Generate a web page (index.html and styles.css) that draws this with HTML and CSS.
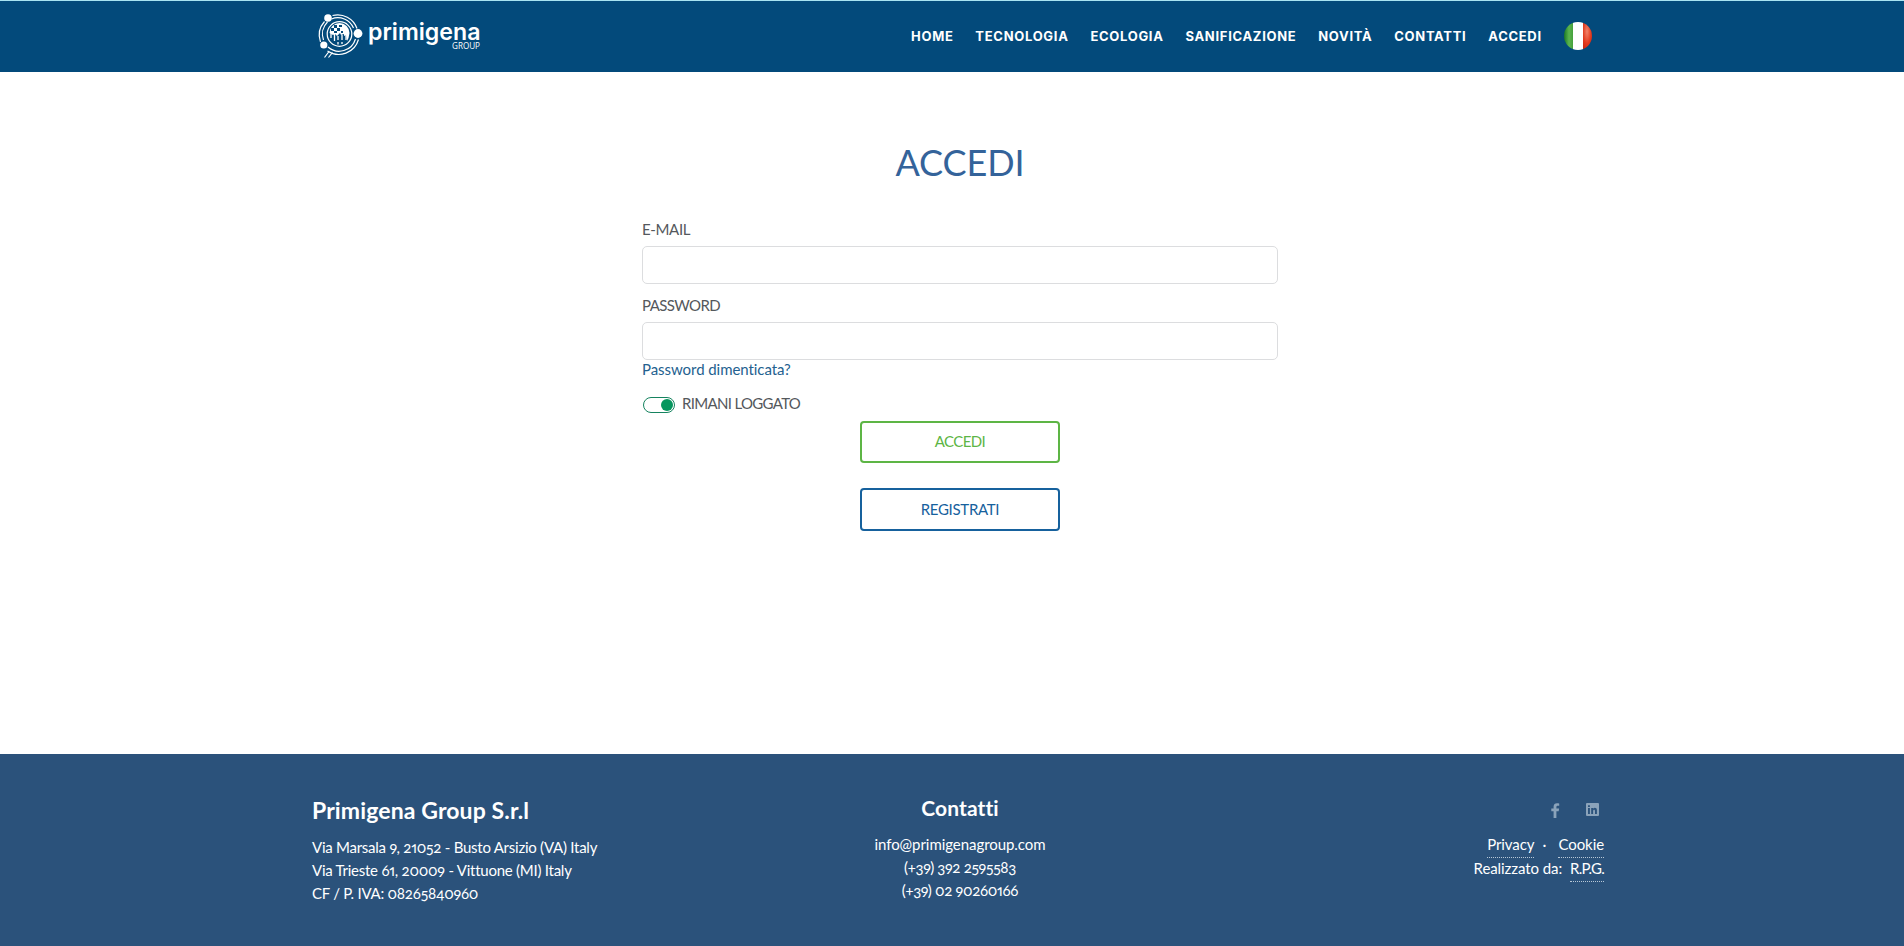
FILE: index.html
```
<!DOCTYPE html>
<html lang="it">
<head>
<meta charset="utf-8">
<title>Accedi - Primigena Group</title>
<link rel="stylesheet" href="styles.css">
</head>
<body>
<header class="header">
  <svg class="logo" width="170" height="54" viewBox="312 8 170 54" role="img" aria-label="Primigena Group">
    <g fill="none" stroke="#fff">
      <circle cx="339.500" cy="34" r="12.300" stroke-width="1.200"/>
      <path d="M332.500 15.500a20.500 20.500 0 0 1 24.500 13M358.500 39.500a20.500 20.500 0 0 1-31 11.500M320.500 42a20.500 20.500 0 0 1 4-20.500" stroke-width="1.200"/>
      <path d="M331.500 19a17 17 0 0 1 22 9M355.500 39a17 17 0 0 1-27.500 8M323.500 40a17 17 0 0 1 4-18" stroke-width="1.200"/>
      <path d="M324.500 57.500l4.500-6M328.500 57.500l4-5" stroke-width="1.200"/>
    </g>
    <path d="M329.500 33a10 10 0 0 1 20 0l-1 5-1.500 3-1-6-2 1v-2l-3 1-1-2-3 3-2-2-2 1z" fill="#fff"/>
    <path d="M331 33v5M334.500 34v7M338 36v4M338 42v2.500M342 35v5M342 42v2M346 34v6" stroke="#fff" stroke-width="1.300"/>
    <path d="M331 28h3v3h-3zM334 25h3v3h-3zM339 25h3v2h-3zM337 28h3v3h-3zM341 31h2v2h-2zM334 31h3v2h-3z" fill="#04497a"/>
    <g fill="#fff"><circle cx="328" cy="18" r="3.800"/><circle cx="358" cy="33.500" r="4.400"/><circle cx="323.800" cy="45" r="3.600"/></g>
    <text class="logo-name" x="368" y="40.300" textLength="112.500" lengthAdjust="spacingAndGlyphs">primigena</text>
    <text class="logo-sub" x="452" y="49" textLength="28" lengthAdjust="spacingAndGlyphs">GROUP</text>
  </svg>
  <nav class="nav">
    <a>HOME</a><a>TECNOLOGIA</a><a>ECOLOGIA</a><a>SANIFICAZIONE</a><a>NOVITÀ</a><a>CONTATTI</a><a>ACCEDI</a>
  </nav>
  <svg class="flag" width="30" height="30" viewBox="0 0 30 30" role="img" aria-label="Italiano">
    <defs>
      <clipPath id="disc"><circle cx="15" cy="15" r="14"/></clipPath>
      <linearGradient id="green" x1="0" x2="1"><stop offset="0" stop-color="#0d6c1c"/><stop offset=".6" stop-color="#5bb54e"/><stop offset="1" stop-color="#45a03c"/></linearGradient>
      <radialGradient id="red" cx=".4" cy=".35" r=".8"><stop offset="0" stop-color="#f2836a"/><stop offset=".5" stop-color="#e23a1e"/><stop offset="1" stop-color="#c01c08"/></radialGradient>
    </defs>
    <g clip-path="url(#disc)">
      <path d="M0 0h10v30H0z" fill="url(#green)"/>
      <path d="M10 0h10v30H10z" fill="#fff"/>
      <path d="M20 0h10v30H20z" fill="url(#red)"/>
    </g>
  </svg>
</header>
<main class="main">
  <h1 class="title">ACCEDI</h1>
  <form class="form">
    <label class="label email-label" for="email">E-MAIL</label>
    <input class="input" id="email" type="email">
    <label class="label password-label" for="password">PASSWORD</label>
    <input class="input" id="password" type="password">
    <a class="forgot">Password dimenticata?</a>
    <div class="remember">
      <span class="switch"><span class="knob"></span></span>
      <span class="remember-text">RIMANI LOGGATO</span>
    </div>
    <button class="button login" type="button">ACCEDI</button>
    <button class="button register" type="button">REGISTRATI</button>
  </form>
</main>
<footer class="footer">
  <section class="company">
    <h2 class="company-name">Primigena Group S.r.l</h2>
    <p class="address">Via Marsala 9, 21052 - Busto Arsizio (VA) Italy</p>
    <p class="address">Via Trieste 61, 20009 - Vittuone (MI) Italy</p>
    <p class="address">CF / P. IVA: 08265840960</p>
  </section>
  <section class="contacts">
    <h3 class="contacts-title">Contatti</h3>
    <p class="mail">info@primigenagroup.com</p>
    <p class="phone">(+39) 392 2595583</p>
    <p class="phone">(+39) 02 90260166</p>
  </section>
  <section class="links">
    <div class="social">
      <svg width="9" height="15" viewBox="0 0 9 15"><path d="M2.600 15V8.300H.3V5.500h2.300V3.600C2.600 1.300 4 .2 6 .2c1 0 1.900.1 2.200.2v2.400H6.800c-1.100 0-1.400.6-1.400 1.300v1.400h2.700l-.4 2.800H5.400V15z"/></svg>
      <svg width="13" height="13" viewBox="0 0 13 13"><path fill-rule="evenodd" d="M1 0h11a1 1 0 0 1 1 1v11a1 1 0 0 1-1 1H1a1 1 0 0 1-1-1V1a1 1 0 0 1 1-1zM2 5v6h1.900V5zM2 2.300v1.800h1.900V2.300zM5.200 5v6h1.900V7.800c0-1.500 1.900-1.500 1.900 0V11h1.900V7.200c0-2.700-2.700-3-3.800-1.400V5z"/></svg>
    </div>
    <p class="legal"><a>Privacy</a><span class="dot">·</span><a>Cookie</a></p>
    <p class="legal"><span class="credit">Realizzato da:</span><a class="rpg">R.P.G.</a></p>
  </section>
</footer>
</body>
</html>
```
FILE: styles.css
```
* { box-sizing: border-box; }
html { overflow: hidden; }
body {
  margin: 0;
  width: 1920px;
  height: 946px;
  display: flex;
  flex-direction: column;
  background: #fff;
  color: #54585c;
  font: 15px/24px Lato, "Liberation Sans", sans-serif;
}
h1, h2, h3, p { margin: 0; font-weight: 400; }

.header {
  height: 72px;
  flex: none;
  display: flex;
  align-items: flex-start;
  padding-left: 312px;
  background: #034a7b;
  border-top: 1px solid #a9e4f2;
}
.logo { margin-top: 7px; overflow: visible; }
.logo-name { font: 600 23.500px Inter, sans-serif; fill: #fff; }
.logo-sub { font: 9.500px "Open Sans", sans-serif; fill: #fff; }
.nav {
  display: flex;
  gap: 21.800px;
  margin-left: 429px;
  padding-top: 22px;
  color: #fff;
  font: 700 13px/26px Inter, sans-serif;
  letter-spacing: .7px;
}
.flag { margin: 20px 0 0 21.500px; }

.main { flex: none; height: 682px; padding-top: 68px; }
.title {
  text-align: center;
  font-size: 36px;
  line-height: 44px;
  letter-spacing: -.1px;
  color: #34639a;
}
.form {
  width: 636px;
  margin: 33px auto 0;
  display: flex;
  flex-direction: column;
}
.label { margin-bottom: 5px; }
.email-label { letter-spacing: -.35px; }
.password-label { margin-top: 9px; letter-spacing: -.6px; }
.input {
  height: 38px;
  border: 1px solid #dcdddf;
  border-radius: 5px;
  background: #fff;
}
.forgot { line-height: 18px; letter-spacing: -.06px; color: #24618f; }
.remember { display: flex; align-items: flex-start; gap: 7px; margin-top: 13px; }
.switch {
  width: 32px;
  height: 16px;
  margin: 6px 0 0 1px;
  padding: 1px;
  display: flex;
  justify-content: flex-end;
  border: 1px solid #16835f;
  border-radius: 8px;
}
.knob { width: 12px; height: 12px; border-radius: 50%; background: #06965e; }
.remember-text { letter-spacing: -.68px; }
.button {
  width: 200px;
  align-self: center;
  padding: 0 0 2px;
  background: #fff;
  border: 2px solid;
  border-radius: 4px;
  font: inherit;
}
.login { height: 42px; margin-top: 6px; color: #5db545; letter-spacing: -.6px; }
.register { height: 43px; margin-top: 25px; color: #16619d; letter-spacing: -.3px; }

.footer {
  flex: 1;
  display: grid;
  grid-template-columns: 431px 431px 430px;
  padding: 41px 0 0 312px;
  background: #2b527b;
  color: #fff;
  line-height: 23px;
  font-variant-numeric: oldstyle-nums proportional-nums;
}
.company-name { padding-top: 1px; margin-bottom: 12px; font-size: 23px; line-height: 28px; font-weight: 700; letter-spacing: .12px; }
.address { letter-spacing: -.25px; }
.contacts { text-align: center; padding-left: 3px; }
.contacts-title { margin-bottom: 12px; font-size: 21px; line-height: 26px; font-weight: 700; letter-spacing: .12px; }
.mail { letter-spacing: -.06px; }
.phone { letter-spacing: -.33px; }
.social { height: 37px; display: flex; justify-content: flex-end; align-items: flex-start; gap: 26px; padding: 8px 5px 0 0; }
.social svg { fill: #8ba3ba; }
.legal { display: flex; justify-content: flex-end; height: 24px; line-height: 24px; letter-spacing: -.08px; }
.legal a { height: 26px; border-bottom: 1px dotted #b8c8d7; }
.dot { width: 24px; padding-left: 8px; }
.credit { margin-right: 8px; }
.legal .rpg { letter-spacing: -.7px; }
```
